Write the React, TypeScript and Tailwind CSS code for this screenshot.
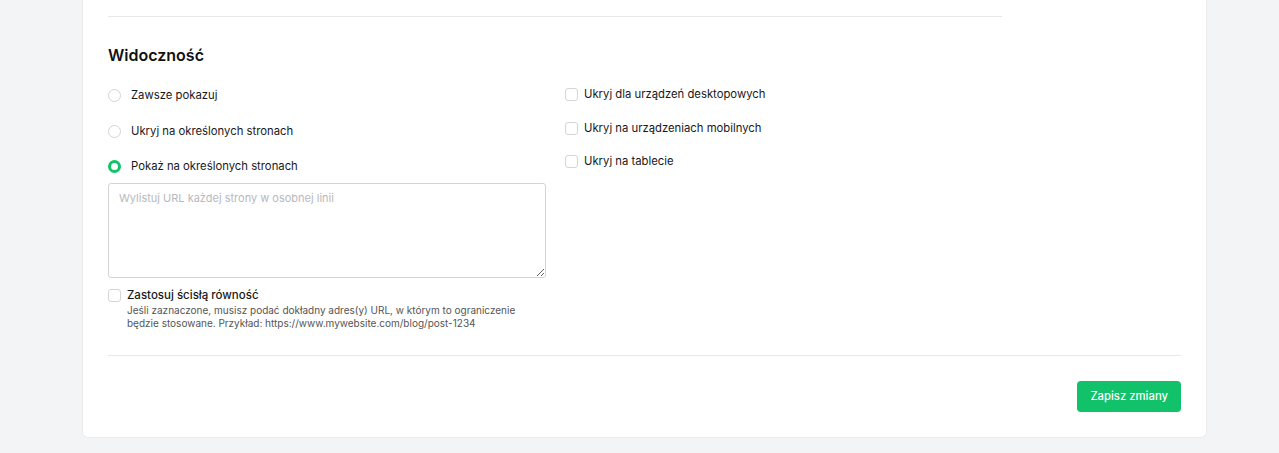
import React from "react"

function Radio({ label, checked }: { label: string; checked?: boolean }) {
  return (
    <label className="flex h-[35.5px] items-center gap-[10px]">
      {checked ? (
        <span className="h-[13px] w-[13px] rounded-full border-[3.5px] border-[#12c26b] bg-white" />
      ) : (
        <span className="h-[13px] w-[13px] rounded-full border border-[#d4d4d8] bg-white" />
      )}
      <span className="text-[11.3px] text-[#18181b]">{label}</span>
    </label>
  )
}

function Check({ label }: { label: string }) {
  return (
    <label className="flex h-[33.5px] items-center gap-[6px]">
      <span className="h-[13px] w-[13px] rounded-[3px] border border-[#d4d4d8] bg-white" />
      <span className="text-[11.3px] text-[#18181b]">{label}</span>
    </label>
  )
}

export default function App() {
  return (
    <div
      className="min-h-[453px] bg-[#f3f4f6] px-[82px]"
      style={{ fontFamily: "Inter, 'Noto Sans', sans-serif" }}
    >
      <div className="w-[1125px] rounded-b-md border-x border-b border-[#ebebed] bg-white px-[25px] pb-[25px] pt-4">
        <div className="w-[894px] border-t border-[#e8e8ea]" />

        {/* Widoczność */}
        <h2 className="mt-[26px] text-[16px] font-semibold leading-6 text-[#111]">Widoczność</h2>

        <div className="mt-[10px] flex gap-[19px]">
          <div className="w-[438px] pt-[1px]">
            <Radio label="Zawsze pokazuj" />
            <Radio label="Ukryj na określonych stronach" />
            <Radio label="Pokaż na określonych stronach" checked />
            <textarea
              className="-mt-[2px] block h-[95px] w-[438px] rounded-[3px] border border-[#d4d4d8] px-[10px] py-[6px] text-[11px] placeholder:text-[#b8b8be] focus:outline-none"
              placeholder="Wylistuj URL każdej strony w osobnej linii"
            />
            <div className="mt-[10px] flex items-start gap-[6px]">
              <span className="mt-[1px] h-[13px] w-[13px] shrink-0 rounded-[3px] border border-[#d4d4d8] bg-white" />
              <div>
                <div className="text-[11.5px] font-medium leading-[15px] text-[#18181b]">Zastosuj ścisłą równość</div>
                <p className="mt-[1px] text-[10px] leading-[13px] text-[#555]">
                  Jeśli zaznaczone, musisz podać dokładny adres(y) URL, w którym to ograniczenie
                  <br />
                  będzie stosowane. Przykład: https://www.mywebsite.com/blog/post-1234
                </p>
              </div>
            </div>
          </div>

          <div className="mt-[1px]">
            <Check label="Ukryj dla urządzeń desktopowych" />
            <Check label="Ukryj na urządzeniach mobilnych" />
            <Check label="Ukryj na tablecie" />
          </div>
        </div>

        <div className="mt-[25px] border-t border-[#e8e8ea]" />

        <div className="mt-[25px] flex justify-end">
          <button className="h-[31px] rounded-[4px] bg-[#12c26b] px-[13px] text-[11.3px] font-medium text-white">
            Zapisz zmiany
          </button>
        </div>
      </div>
    </div>
  )
}
